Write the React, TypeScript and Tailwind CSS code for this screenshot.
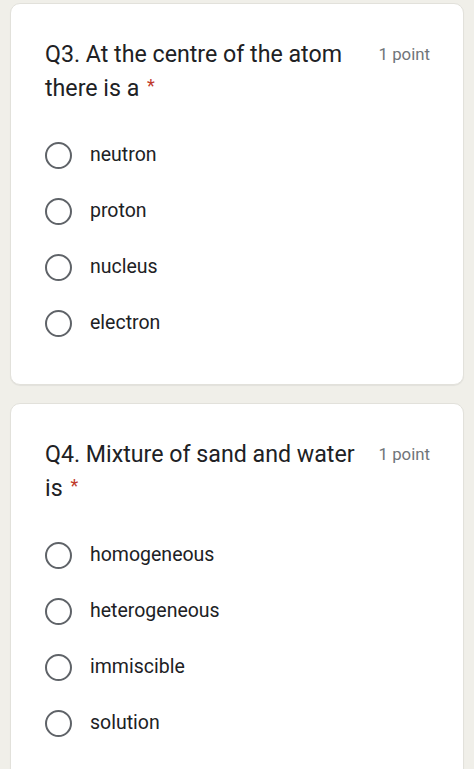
const questions = [
  {
    title: ["Q3. At the centre of the atom", "there is a"],
    options: ["neutron", "proton", "nucleus", "electron"],
  },
  {
    title: ["Q4. Mixture of sand and water", "is"],
    options: ["homogeneous", "heterogeneous", "immiscible", "solution"],
  },
];

const Radio = () => (
  <span className="w-[27px] h-[27px] rounded-full border-[2.5px] border-[#5f6368] shrink-0" />
);

const App = () => {
  return (
    <div
      className="h-[769px] overflow-hidden bg-[#f0efe9] px-[10px] pt-[3px] flex flex-col gap-[18px]"
      style={{ fontFamily: "Roboto, 'Noto Sans', sans-serif" }}
    >
      {questions.map((q, i) => (
        <div
          key={i}
          className="bg-white rounded-[10px] border border-[#e2e1db] shadow-[0_1px_1px_rgba(0,0,0,0.06)] pt-[33px] pb-[33px] pl-[34px] pr-[33px] shrink-0"
        >
          <div className="flex justify-between items-start">
            <h2 className="text-[23.2px] leading-[34px] text-[#202124]">
              {q.title[0]}
              <br />
              {q.title[1]}{" "}
              <span className="text-[18px] align-top relative top-[-2px] ml-[2px] text-[#c0392b]">*</span>
            </h2>
            <span className="text-[16.8px] leading-[34px] text-[#70757a] whitespace-nowrap">1 point</span>
          </div>
          <div className="mt-[22px] flex flex-col">
            {q.options.map((o) => (
              <label key={o} className="h-[56px] flex items-center gap-[18px]">
                <Radio />
                <span className="text-[19.5px] text-[#202124]">{o}</span>
              </label>
            ))}
          </div>
        </div>
      ))}
    </div>
  );
};

export default App;
